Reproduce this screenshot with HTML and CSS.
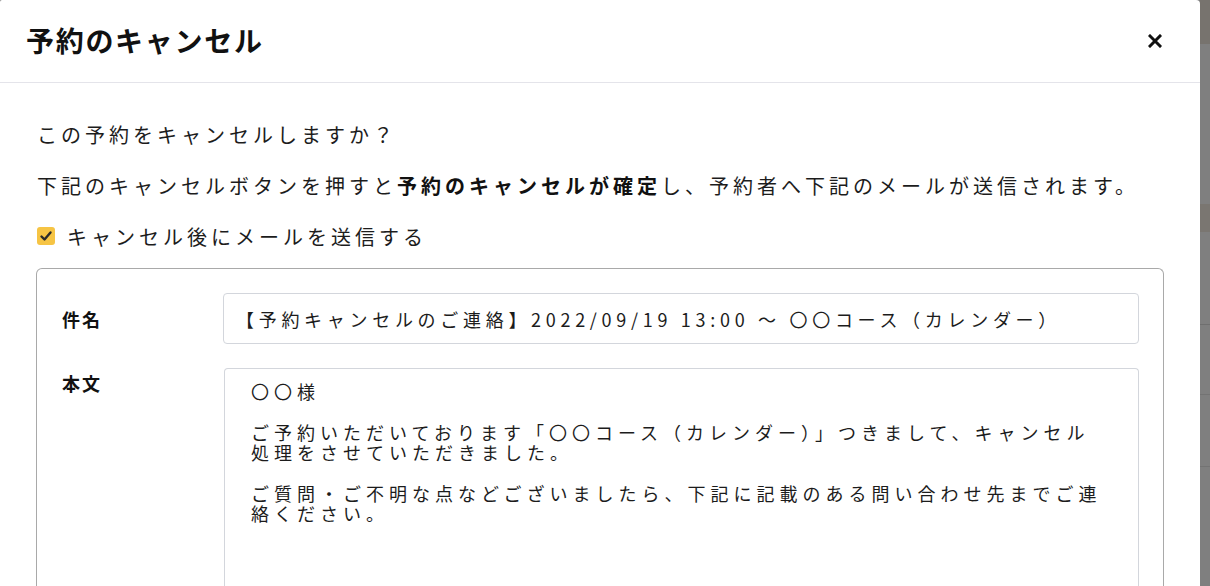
FILE: index.html
```html
<!DOCTYPE html>
<html lang="ja">
<head>
<meta charset="utf-8">
<title>予約のキャンセル</title>
<link rel="stylesheet" href="styles.css">
</head>
<body>
<div class="screen">
  <div class="modal">
    <div class="modal-header">
      <h1 class="modal-title">予約のキャンセル</h1>
      <button class="close-btn" aria-label="閉じる">
        <svg width="14" height="14" viewBox="0 0 14 14"><path d="M2 2 L12 12 M12 2 L2 12" stroke="#111" stroke-width="3" stroke-linecap="square"/></svg>
      </button>
    </div>
    <div class="modal-body">
      <p class="lead">この予約をキャンセルしますか？</p>
      <p class="lead">下記のキャンセルボタンを押すと<strong>予約のキャンセルが確定</strong>し、予約者へ下記のメールが送信されます。</p>
      <label class="check-row">
        <span class="checkbox">
          <svg width="14" height="14" viewBox="0 0 14 14"><path d="M2.5 7.5 L5.5 10.5 L11.5 3.5" fill="none" stroke="#2b2b2b" stroke-width="2.4" stroke-linecap="round" stroke-linejoin="round"/></svg>
        </span>
        <span class="check-label">キャンセル後にメールを送信する</span>
      </label>
      <div class="mail-card">
        <div class="field-row">
          <div class="field-label">件名</div>
          <div class="input">【予約キャンセルのご連絡】2022/09/19 13:00 〜 〇〇コース（カレンダー）</div>
        </div>
        <div class="field-row top">
          <div class="field-label">本文</div>
          <div class="textarea">
            <p>〇〇様</p>
            <p>ご予約いただいております「〇〇コース（カレンダー）」つきまして、キャンセル処理をさせていただきました。</p>
            <p>ご質問・ご不明な点などございましたら、下記に記載のある問い合わせ先までご連絡ください。</p>
          </div>
        </div>
      </div>
    </div>
  </div>
  <div class="backdrop">
    <div class="bd-a"></div>
    <div class="bd-b"></div>
    <div class="bd-c"></div>
    <div class="bd-d"></div>
    <div class="bd-e"></div>
    <div class="bd-f"></div>
  </div>
</div>
</body>
</html>
```

FILE: styles.css
```css
* { box-sizing: border-box; }
html, body {
  margin: 0;
  padding: 0;
  width: 1210px;
  height: 586px;
  overflow: hidden;
  background: #7f7f7f;
  font-family: "Noto Sans CJK JP", "Noto Sans", sans-serif;
  color: #1c1c1c;
}
.screen {
  display: flex;
  width: 1210px;
  height: 586px;
}
.modal {
  width: 1200px;
  flex: none;
  background: #fff;
  border-top-right-radius: 4px;
  border-top-left-radius: 2px;
  display: flex;
  flex-direction: column;
  overflow: hidden;
}
.modal-header {
  flex: none;
  height: 83px;
  border-bottom: 1px solid #e4e4ea;
  display: flex;
  align-items: center;
  justify-content: space-between;
  padding: 0 38px 0 26px;
}
.modal-title {
  margin: 0;
  font-size: 28px;
  font-weight: 700;
  letter-spacing: 1.7px;
  color: #111;
  line-height: 1;
  padding-bottom: 2px;
}
.close-btn {
  border: 0;
  background: none;
  padding: 0;
  width: 14px;
  height: 14px;
  display: flex;
}
.modal-body {
  flex: none;
  padding: 38px 36px 0 37px;
}
.lead {
  margin: 0;
  font-size: 20px;
  line-height: 28px;
  letter-spacing: 4px;
  color: #1c1c1c;
  white-space: nowrap;
}
.lead + .lead { margin-top: 23px; }
.lead strong { font-weight: 700; color: #111; }
.check-row {
  display: flex;
  align-items: center;
  gap: 12px;
  margin-top: 22px;
  height: 28px;
}
.checkbox {
  width: 18px;
  height: 18px;
  border-radius: 3px;
  background: #f6c444;
  display: flex;
  align-items: center;
  justify-content: center;
}
.check-label {
  font-size: 20px;
  letter-spacing: 4px;
  color: #1c1c1c;
}
.mail-card {
  margin-top: 18px;
  width: 1128px;
  margin-left: -1px;
  border: 1px solid #a9a9a9;
  border-bottom: 0;
  border-radius: 6px 6px 0 0;
  padding: 24px 24px 0 24px;
  height: 340px;
}
.field-row {
  display: flex;
  align-items: center;
}
.field-row.top {
  align-items: flex-start;
  margin-top: 24px;
}
.field-label {
  width: 162px;
  padding-left: 1px;
  font-size: 18px;
  font-weight: 700;
  letter-spacing: 2px;
  color: #111;
}
.field-row.top .field-label { padding-top: 2px; }
.input {
  width: 916px;
  height: 51px;
  border: 1px solid #d3d6dc;
  border-radius: 4px;
  padding: 0 12px;
  display: flex;
  align-items: center;
  font-size: 18px;
  letter-spacing: 4.7px;
  color: #1c1c1c;
  white-space: nowrap;
}
.textarea {
  width: 915px;
  margin-left: 1px;
  height: 260px;
  border: 1px solid #d3d6dc;
  border-bottom: 0;
  border-radius: 4px 4px 0 0;
  padding: 12px 28px 0 26px;
  font-size: 18px;
  line-height: 20px;
  letter-spacing: 5px;
  color: #1c1c1c;
}
.textarea p { margin: 0 0 21px 0; }
.backdrop {
  flex: 1;
  display: flex;
  flex-direction: column;
}
.bd-a { height: 44px; background: #77736e; }
.bd-b { height: 160px; background: #7f7f7f; }
.bd-c { height: 28px; background: #7a7671; }
.bd-d { height: 93px; background: #7f7f7f; border-bottom: 1px solid #6f6f6f; }
.bd-e { height: 70px; background: #7f7f7f; border-bottom: 1px solid #737373; }
.bd-f { height: 72px; background: #7f7f7f; border-bottom: 1px solid #737373; }
```
